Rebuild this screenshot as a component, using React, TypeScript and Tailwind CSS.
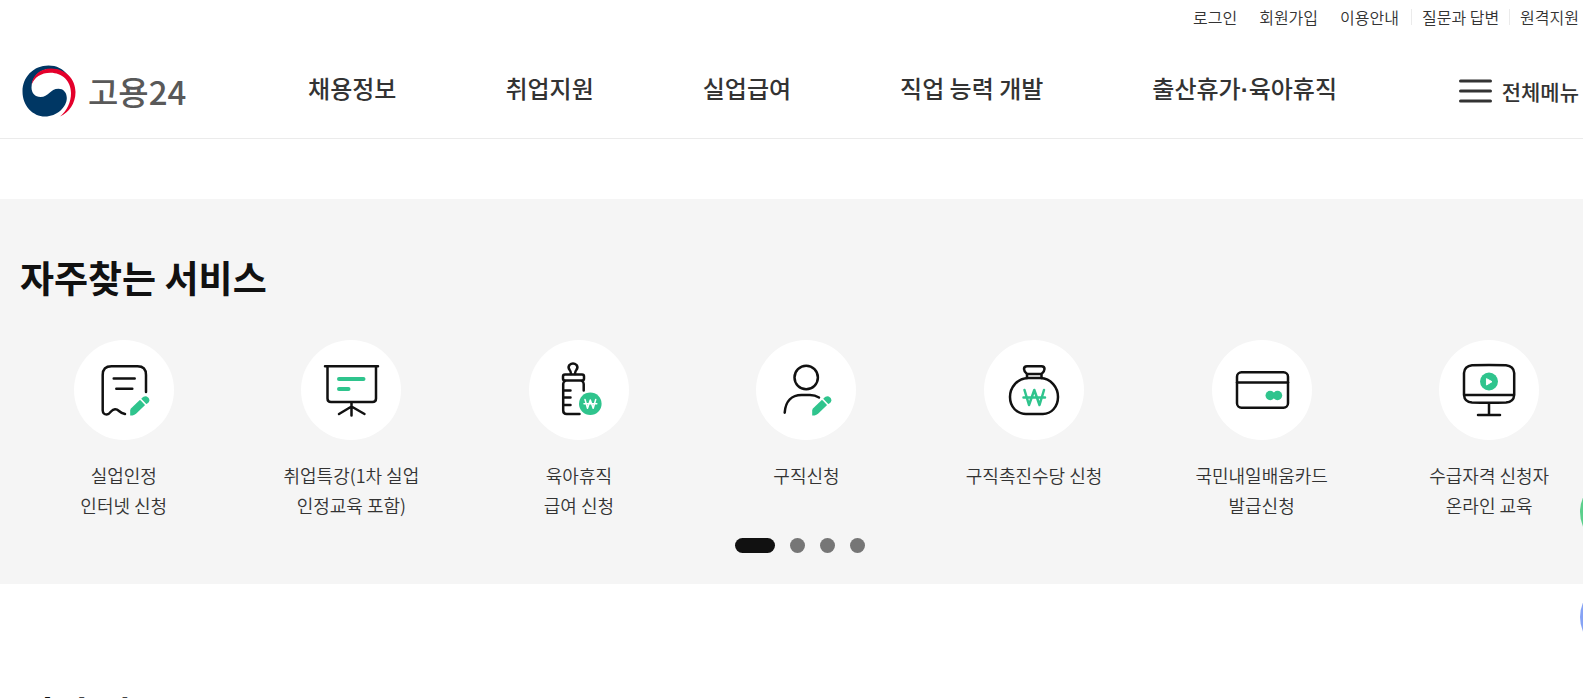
import React from "react";

const INK = "#111111";
const GREEN = "#2fc48d";

function Glyph({ children }: { children: React.ReactNode }) {
  return (
    <svg viewBox="0 0 100 100" className="size-[100px]" fill="none" stroke={INK} strokeWidth="2.5" strokeLinecap="round" strokeLinejoin="round" aria-hidden="true">
      {children}
    </svg>
  );
}

function Pencil() {
  return (
    <g fill={GREEN} stroke="none">
      <path d="M56.200 75.400V70.500Q56.300 69.200 57.200 68.300L65.500 60.200Q66 59.900 66.500 60.300L70.600 64.400Q71 65 70.600 65.400L62.300 73.500Q60.500 75.200 58.500 75.400Z" />
      <path d="M67.600 58.200Q70.200 55.600 72.800 56.500Q75.300 57.600 75.500 60.200Q75.500 62.200 72.700 63.900Q72.200 64 71.800 63.500L67.700 59.300Q67.200 58.700 67.600 58.200Z" />
    </g>
  );
}

const services = [
  {
    lines: ["실업인정", "인터넷 신청"],
    icon: (
      <Glyph>
        <path d="M72 52V35Q72 26.300 63.500 26.300H37.500Q28.700 26.300 28.700 35V70.500Q29 74.500 32.700 74.500Q34.700 74.500 37 71.500Q41 67.200 45 71Q47.500 73.300 51 74" />
        <path d="M39.700 38.500H60.700M42.300 48.700H58.300" />
        <Pencil />
      </Glyph>
    ),
  },
  {
    lines: ["취업특강(1차 실업", "인정교육 포함)"],
    icon: (
      <Glyph>
        <path d="M24 26.300H77M26.500 27V58.500Q26.500 62 30 62H71.500Q75 62 75 58.500V27M50.500 62V75.500M50.500 66.500L38 74M50.500 66.500L63.500 74" />
        <path d="M38 39H62.500M38 49H47.500" stroke={GREEN} strokeWidth="4" />
      </Glyph>
    ),
  },
  {
    lines: ["육아휴직", "급여 신청"],
    icon: (
      <Glyph>
        <path d="M42 34Q42 31.500 40.700 30Q38.700 27.500 40.300 25.200Q44 21.700 47.700 25.200Q49.300 27.500 47.300 30Q46 31.500 46 34" />
        <rect x="34" y="34.500" width="21" height="6" rx="2" />
        <path d="M36 41Q34.200 42 34.200 44V70.500Q34.200 74 37.700 74H50.500M53 41Q54.700 42 54.700 44V50.500M35 50.500H41.500M35 57.500H41.500M35 65H41.500" />
        <circle cx="61.300" cy="63.800" r="11.300" fill={GREEN} stroke="none" />
        <path d="M56 59.500L58.500 68.300L61.300 60L64.200 68.300L66.700 59.500M55 63.800H67.800" stroke="white" strokeWidth="1.500" />
      </Glyph>
    ),
  },
  {
    lines: ["구직신청"],
    icon: (
      <Glyph>
        <circle cx="50.200" cy="37.500" r="11.700" />
        <path d="M28.700 72.700C29.500 61 36 55 45.500 55H54Q59 55 63 57.500" />
        <Pencil />
      </Glyph>
    ),
  },
  {
    lines: ["구직촉진수당 신청"],
    icon: (
      <Glyph>
        <path d="M43 26.200H57.500Q60.500 26.200 60.500 29Q60.500 31.500 57.500 34H43Q40 31.500 40 29Q40 26.200 43 26.200ZM43 34V38M57.500 34V38" />
        <path d="M44 38H56.500C67 38.500 74 47.500 74 57C74 67 67 74 59 74H42C33 74 26 67 26 57C26 47.500 33 38.500 44 38Z" />
        <path d="M40.500 50L45 65L50.300 50L55.500 65L60 50M39.500 57.500H61" stroke={GREEN} />
      </Glyph>
    ),
  },
  {
    lines: ["국민내일배움카드", "발급신청"],
    icon: (
      <Glyph>
        <rect x="25" y="32.200" width="51" height="35.600" rx="4.500" />
        <path d="M25 42.500H76" />
        <circle cx="58.200" cy="55.500" r="4.700" fill={GREEN} stroke="none" />
        <circle cx="65.500" cy="55.500" r="4.700" fill={GREEN} stroke="none" />
      </Glyph>
    ),
  },
  {
    lines: ["수급자격 신청자", "온라인 교육"],
    icon: (
      <Glyph>
        <path d="M33 25.200Q50 24.600 67 25.200Q74.700 26 75.200 33V55Q74.700 62 67 62.500Q50 63.200 33 62.500Q25.500 62 25 55V33Q25.500 26 33 25.200ZM25.500 55H75M50 63V74.500M39 75H61" />
        <circle cx="50" cy="41.500" r="9" fill={GREEN} stroke="none" />
        <path d="M47.800 38.800L53 41.700L47.800 44.800Z" fill="white" stroke="white" strokeWidth="1" />
      </Glyph>
    ),
  },
];

const navItems = [["채용정보"], ["취업지원"], ["실업급여"], ["직업 능력 개발"], ["출산휴가", "육아휴직"]];

function Logo() {
  return (
    <a href="#home" className="flex items-center gap-3">
      <svg viewBox="0 0 54 52" className="h-[52px] w-[54px]" aria-hidden="true">
        <path d="M46 10.500C41 3.500 34.500 0.500 26.500 0.500C11.500 0.500 0.500 12 0.500 26.500C0.500 41 11 51.500 23 51.500C35 51.500 44.800 42 44.800 33C44.800 27 41 23.700 36.500 23.700C28 23.700 26.500 32 18.500 32C13 32 9.500 28 9.500 22.500C9.500 12 18 4 28 4C36 4 41 6.500 46 10.500Z" fill="#003764" />
        <path d="M9.600 20C10.500 10 18.500 3.500 29 3.500C44 3.500 53.500 14.500 53.500 27C53.500 38.500 47 47.500 38 51.500C45 45.500 49 37.500 49 28C49 16 40 7.800 28.500 7.800C19 7.800 12 12.500 9.600 20Z" fill="#e4002b" />
      </svg>
      <span className="text-[33px] leading-10 font-medium text-[#595959]">고용24</span>
    </a>
  );
}

export default function App() {
  return (
    <div className="relative h-screen overflow-hidden bg-white font-['Noto_Sans_CJK_KR',sans-serif] text-[#333333]">
      <header className="border-b border-[#ebebeb]">
        <ul className="flex h-[34px] items-center justify-end pr-1 text-base leading-6 font-[350]">
          <li className="pr-[22px]"><a href="#login">로그인</a></li>
          <li className="pr-[22px]"><a href="#join">회원가입</a></li>
          <li className="pr-3"><a href="#guide">이용안내</a></li>
          <li className="flex items-center"><span className="h-4 w-px bg-[#ebebeb]" /><a href="#qna" className="px-[10px]">질문과 답변</a></li>
          <li className="flex items-center"><span className="h-4 w-px bg-[#ebebeb]" /><a href="#remote" className="pl-[10px]">원격지원</a></li>
        </ul>
        <div className="flex h-26 items-center justify-between pt-[10px] pr-1 pl-[22px]">
          <Logo />
          <nav className="pb-1">
            <ul className="flex gap-[109px] text-2xl leading-9 font-medium">
              {navItems.map((parts) => (
                <li key={parts[0]}>
                  <a href="#menu">
                    {parts[0]}
                    {parts[1] && <span className="font-['Liberation_Sans',sans-serif] font-bold">·</span>}
                    {parts[1]}
                  </a>
                </li>
              ))}
            </ul>
          </nav>
          <button type="button" className="flex items-center gap-[10px] text-[21px] leading-8 font-medium">
            <svg viewBox="0 0 33 24" className="h-6 w-[33px]" stroke="#333333" strokeWidth="3" strokeLinecap="round" aria-hidden="true">
              <path d="M1.500 2H31.500M1.500 12H31.500M1.500 22H31.500" />
            </svg>
            전체메뉴
          </button>
        </div>
      </header>

      <main>
        <section className="mt-15 h-[385px] bg-[#f5f5f5] pt-12">
          <h2 className="pl-5 text-[37px] leading-15 font-bold text-[#111111]">자주찾는 서비스</h2>
          <ul className="mt-[33px] -mr-5 grid grid-cols-7 pl-[10px]">
            {services.map((s) => (
              <li key={s.lines[0]}>
                <a href="#service" className="flex flex-col items-center gap-5">
                  <span className="rounded-full bg-white">{s.icon}</span>
                  <span className="h-15 text-center text-lg leading-[30px] font-[350]">
                    {s.lines.map((line) => (
                      <span key={line} className="block">{line}</span>
                    ))}
                  </span>
                </a>
              </li>
            ))}
          </ul>
          <div className="mt-[18px] flex justify-center gap-[15px] pl-4">
            <button type="button" aria-label="1" className="h-[15px] w-10 rounded-full bg-[#111111]" />
            <button type="button" aria-label="2" className="size-[15px] rounded-full bg-[#767676]" />
            <button type="button" aria-label="3" className="size-[15px] rounded-full bg-[#767676]" />
            <button type="button" aria-label="4" className="size-[15px] rounded-full bg-[#767676]" />
          </div>
        </section>
        <section className="pt-[99px]">
          <h2 className="pl-5 text-[37px] leading-15 font-bold text-[#111111]">직업 맵</h2>
        </section>
      </main>

      <div className="absolute top-[477px] -right-[67px] flex flex-col gap-[35px]">
        <button type="button" aria-label="상담" className="size-[70px] rounded-full bg-[#5bd08c]" />
        <button type="button" aria-label="도움말" className="size-[70px] rounded-full bg-[#86a3f5]" />
      </div>
    </div>
  );
}
